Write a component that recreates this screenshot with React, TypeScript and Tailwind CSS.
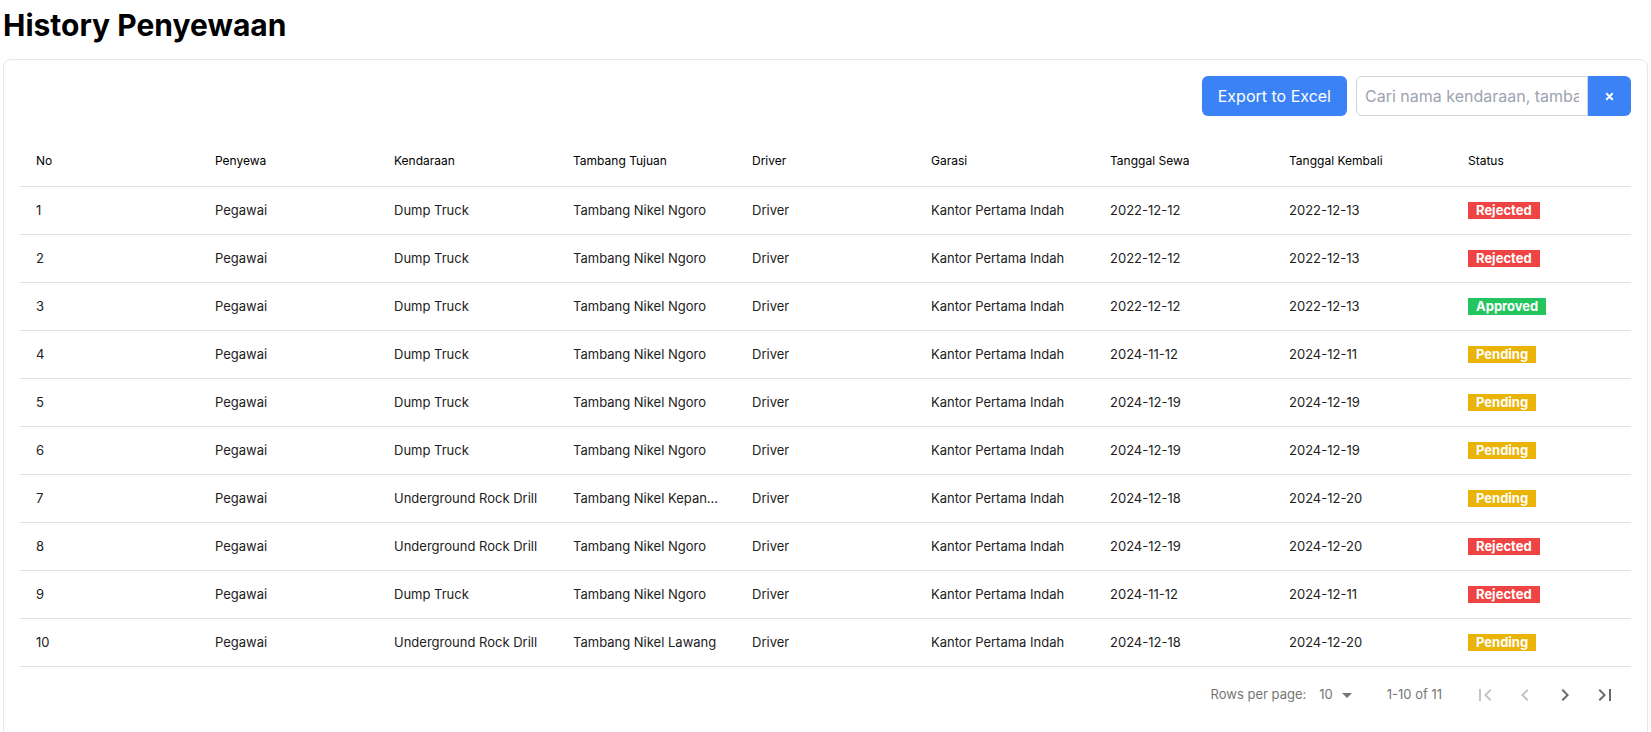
const rows = [
  { tujuan: "Tambang Nikel Ngoro", kendaraan: "Dump Truck", sewa: "2022-12-12", kembali: "2022-12-13", status: "Rejected" },
  { tujuan: "Tambang Nikel Ngoro", kendaraan: "Dump Truck", sewa: "2022-12-12", kembali: "2022-12-13", status: "Rejected" },
  { tujuan: "Tambang Nikel Ngoro", kendaraan: "Dump Truck", sewa: "2022-12-12", kembali: "2022-12-13", status: "Approved" },
  { tujuan: "Tambang Nikel Ngoro", kendaraan: "Dump Truck", sewa: "2024-11-12", kembali: "2024-12-11", status: "Pending" },
  { tujuan: "Tambang Nikel Ngoro", kendaraan: "Dump Truck", sewa: "2024-12-19", kembali: "2024-12-19", status: "Pending" },
  { tujuan: "Tambang Nikel Ngoro", kendaraan: "Dump Truck", sewa: "2024-12-19", kembali: "2024-12-19", status: "Pending" },
  { tujuan: "Tambang Nikel Kepanjen", kendaraan: "Underground Rock Drill", sewa: "2024-12-18", kembali: "2024-12-20", status: "Pending" },
  { tujuan: "Tambang Nikel Ngoro", kendaraan: "Underground Rock Drill", sewa: "2024-12-19", kembali: "2024-12-20", status: "Rejected" },
  { tujuan: "Tambang Nikel Ngoro", kendaraan: "Dump Truck", sewa: "2024-11-12", kembali: "2024-12-11", status: "Rejected" },
  { tujuan: "Tambang Nikel Lawang", kendaraan: "Underground Rock Drill", sewa: "2024-12-18", kembali: "2024-12-20", status: "Pending" },
];

const headers = ["No", "Penyewa", "Kendaraan", "Tambang Tujuan", "Driver", "Garasi", "Tanggal Sewa", "Tanggal Kembali", "Status"];

const badgeColor: Record<string, string> = {
  Rejected: "bg-[#ef4444]",
  Approved: "bg-[#22c55e]",
  Pending: "bg-[#eab308]",
};

const Cell = ({ children }: { children: React.ReactNode }) => (
  <div className="flex min-w-0 items-center px-4">
    <div className="truncate">{children}</div>
  </div>
);

const PageIcon = ({ d, disabled }: { d: string; disabled?: boolean }) => (
  <button className="flex h-10 w-10 items-center justify-center p-2">
    <svg viewBox="0 0 24 24" width="24" height="24" className={disabled ? "fill-[#c4c4c4]" : "fill-[#6b6b6b]"}>
      <path d={d} />
    </svg>
  </button>
);

const App = () => {
  return (
    <div className="min-h-screen bg-white px-[3px] pt-[7px] font-['Inter',sans-serif]">
      <h1 className="text-[30px] leading-[36px] font-bold text-black">History Penyewaan</h1>

      <div className="mt-4 rounded-lg border border-[#e5e7eb] bg-white p-4">
        <div className="mb-[19px] flex justify-end gap-[9px]">
          <button className="h-10 rounded-md bg-[#3b82f6] px-4 text-base text-white">Export to Excel</button>
          <div className="flex">
            <input
              placeholder="Cari nama kendaraan, tambang, driver"
              className="h-10 w-[232px] rounded-l-md border border-[#d1d5db] px-2 text-base text-gray-700 placeholder:text-[#9ca3af] outline-none"
            />
            <button className="flex h-10 w-[43px] items-center justify-center rounded-r-md bg-[#3b82f6] text-white">
              <svg viewBox="0 0 10 10" width="9" height="9" className="stroke-white" strokeWidth="2.2" strokeLinecap="round">
                <path d="M2 2l6 6M8 2l-6 6" />
              </svg>
            </button>
          </div>
        </div>

        <div className="text-[13px] text-[#212121]">
          <div className="grid h-[52px] grid-cols-9 border-b border-[#e0e0e0] text-[12px] text-black">
            {headers.map((h) => (
              <Cell key={h}>{h}</Cell>
            ))}
          </div>
          {rows.map((r, i) => (
            <div key={i} className="grid h-[48px] grid-cols-9 border-b border-[#e0e0e0]">
              <Cell>{i + 1}</Cell>
              <Cell>Pegawai</Cell>
              <Cell>{r.kendaraan}</Cell>
              <Cell>{r.tujuan}</Cell>
              <Cell>Driver</Cell>
              <Cell>Kantor Pertama Indah</Cell>
              <Cell>{r.sewa}</Cell>
              <Cell>{r.kembali}</Cell>
              <Cell>
                <span className={`${badgeColor[r.status]} inline-block px-2 text-[13px] leading-[17px] font-bold text-white`}>
                  {r.status}
                </span>
              </Cell>
            </div>
          ))}

          <div className="flex h-14 items-center justify-end pr-[6px] text-[13px] text-[#757575]">
            <span>Rows per page:</span>
            <div className="ml-[13px] flex items-center">
              <span>10</span>
              <svg viewBox="0 0 24 24" width="24" height="24" className="ml-[2px] fill-[#757575]">
                <path d="M7 10l5 5 5-5z" />
              </svg>
            </div>
            <span className="ml-[28px] mr-[23px]">1-10 of 11</span>
            <PageIcon disabled d="M18.41 16.59L13.82 12l4.59-4.59L17 6l-6 6 6 6zM6 6h2v12H6z" />
            <PageIcon disabled d="M15.41 7.41L14 6l-6 6 6 6 1.41-1.41L10.83 12z" />
            <PageIcon d="M10 6L8.59 7.41 13.17 12l-4.58 4.59L10 18l6-6z" />
            <PageIcon d="M5.59 7.41L10.18 12l-4.59 4.59L7 18l6-6-6-6zM16 6h2v12h-2z" />
          </div>
        </div>
      </div>
    </div>
  );
};

export default App;
